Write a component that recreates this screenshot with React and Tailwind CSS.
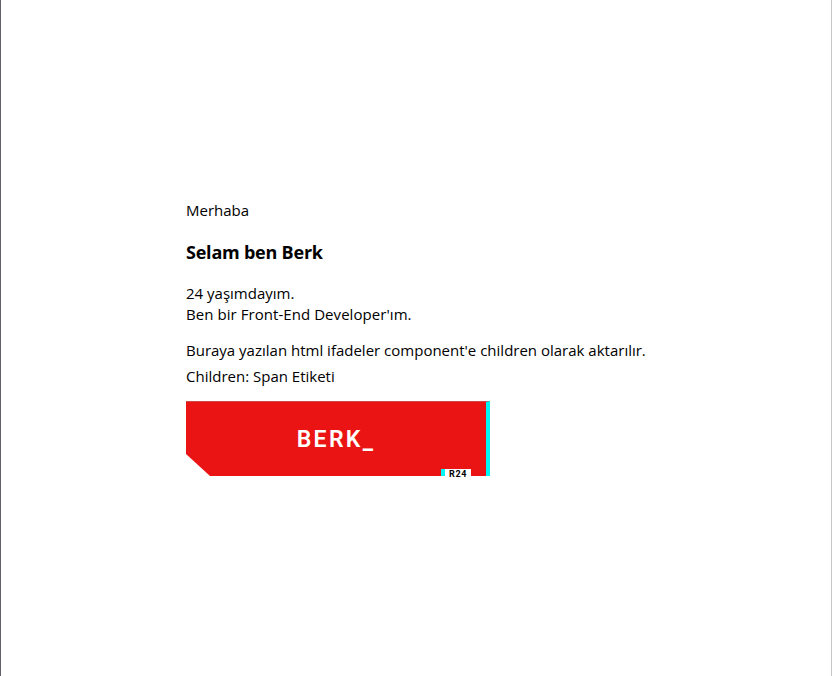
function GlitchButton() {
  return (
    <button className="relative mt-[14px] block h-[75px] w-[304px] text-white">
      <span className="flex h-full w-full items-center justify-center border-r-4 border-t border-r-[#00f5f5] border-t-[#cf4a4a] bg-[#eb1414] pt-[2px] [clip-path:polygon(0_0,100%_0,100%_100%,24px_100%,0_53px)]">
        <span className="whitespace-nowrap font-['Roboto',sans-serif] text-[23px] font-semibold leading-[30px] tracking-[2.3px]">
          BERK<span className="inline-block translate-y-[2px]">_</span>
        </span>
      </span>
      <span className="absolute left-[255px] top-[68px] flex h-[7px] w-[30px] border-l-4 border-[#00f5f5] bg-white pl-[4px] font-['Roboto',sans-serif] text-[9px] font-bold leading-[11px] tracking-[0.7px] text-black">
        R24
      </span>
    </button>
  );
}

export default function App() {
  return (
    <main className="h-[676px] w-[832px] overflow-hidden border-l border-r border-l-[#606468] border-r-[#c6c6c6] bg-white pl-[185px] pt-[200px] font-['Open_Sans',sans-serif] text-[15px] leading-[21px] text-black">
      <div className="flex flex-col items-start whitespace-nowrap">
        <p>Merhaba</p>
        <h3 className="mt-[19px] text-[18px] font-bold leading-[24px] tracking-[-0.22px]">Selam ben Berk</h3>
        <p className="mt-[19px]">24 yaşımdayım.</p>
        <p className="tracking-[0.06px]">Ben bir Front-End Developer'ım.</p>
        <p className="mt-[15px]">Buraya yazılan html ifadeler component'e children olarak aktarılır.</p>
        <p className="mt-[5px]">Children: Span Etiketi</p>
        <GlitchButton />
      </div>
    </main>
  );
}
